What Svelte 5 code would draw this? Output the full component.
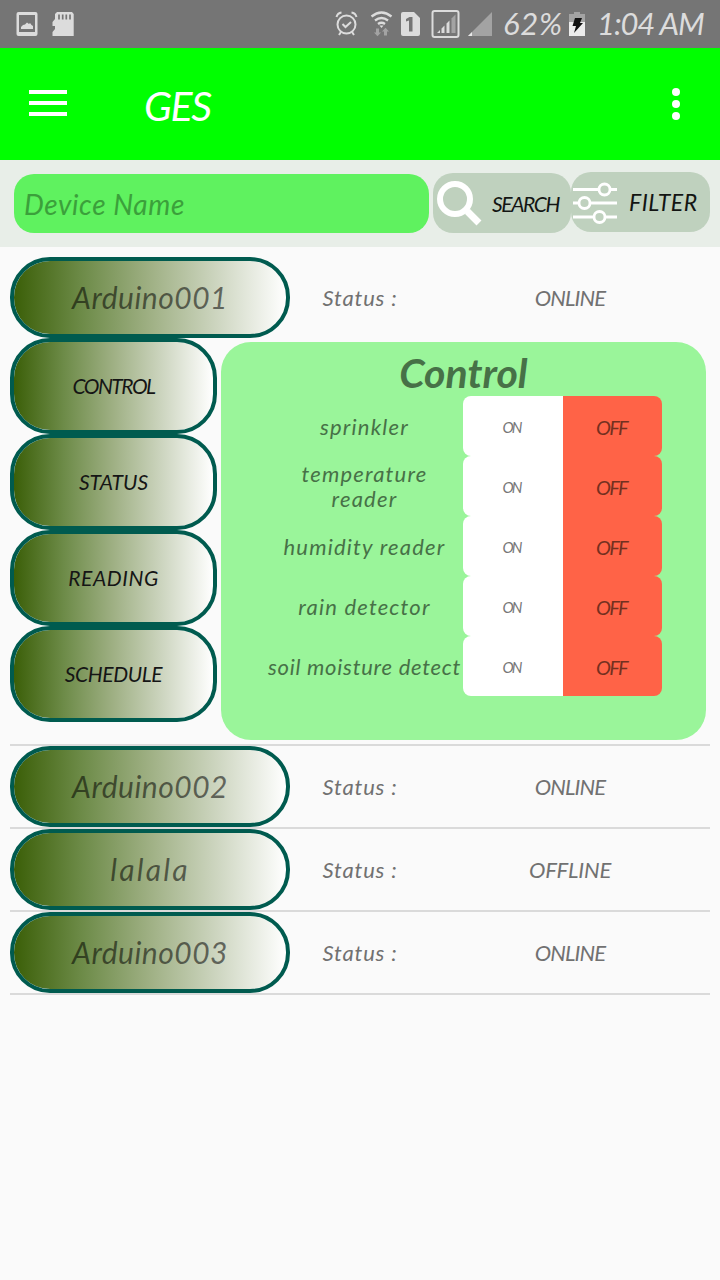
<script>
  const tabs = [
    { name: 'CONTROL', gap: -1.5 },
    { name: 'STATUS', gap: 0 },
    { name: 'READING', gap: 0.6 },
    { name: 'SCHEDULE', gap: -0.4 }
  ];
  const sensors = ['sprinkler', 'temperature reader', 'humidity reader', 'rain detector', 'soil moisture detect'];
  const devices = [
    { name: 'Arduino001', state: 'ONLINE', open: true },
    { name: 'Arduino002', state: 'ONLINE' },
    { name: 'lalala', state: 'OFFLINE' },
    { name: 'Arduino003', state: 'ONLINE' }
  ];
</script>

<div class="screen">
  <div class="statusbar">
    <svg class="notices" width="80" height="48" viewBox="0 0 80 48">
      <path fill="#dcdcdc" fill-rule="evenodd" d="M18.500 12h17a2 2 0 0 1 2 2v20a2 2 0 0 1-2 2h-17a2 2 0 0 1-2-2V14a2 2 0 0 1 2-2zM19 15v17h16V15z" />
      <path fill="#dcdcdc" d="M21 29v-2l2-2 2-.5 2-2 2 1.500 1-1 1.500 2 1.500 1v3z" />
      <path fill="#dcdcdc" d="M57 12h15l1.700 2v22H52.500v-4l2.500-3v-3h-2.500v-4l2.500-3v-5z" />
      <path stroke="#757575" stroke-width="1.700" d="M59 14.500v5M62.700 14.500v5M66.300 14.500v5M70 14.500v5" />
    </svg>
    <div class="system">
      <svg width="164" height="48" viewBox="332 0 164 48">
        <g fill="none" stroke="#dcdcdc" stroke-width="2">
          <circle cx="346.500" cy="24.500" r="9" />
          <path d="M342.500 24l3 3 5.500-5M336.500 17q1-4 5-4.500M351.500 12.500q4 .5 5 4.500M341 32l-2 3M352 32l2 3" />
          <path stroke-width="2.300" d="M371.500 16.500q10-8 20 0M375 20.500q6.500-5 13 0M378 24q3.500-2.500 7 0" />
        </g>
        <path fill="#dcdcdc" d="M379.500 25.500h4l-2 2.500z" />
        <path fill="#a3a3a3" d="M376 28.500h3v4h2l-3.500 3.700-3.500-3.700h2zM384 35.500v-4h-2l3.500-3.700 3.500 3.700h-2v4z" />
        <path fill="#dcdcdc" d="M403 12h11l6 6v16q0 2-2 2h-15q-2 0-2-2V14q0-2 2-2z" />
        <path fill="#757575" d="M409.500 17h3v14.500h-3.500V20.500l-3 1V19z" />
        <rect x="432.500" y="11" width="26" height="26" rx="2" fill="none" stroke="#dcdcdc" stroke-width="2" />
        <path fill="#dcdcdc" d="M437 33l3-3v3zM441.500 28.500l3-3V33h-3zM446.500 23.500l3-3V33h-3z" />
        <path fill="#a3a3a3" d="M451.500 18.500l4-4V33h-4z" />
        <path fill="#a3a3a3" d="M468 36l24-24v24z" />
        <path fill="#e8e8e8" d="M468 36l4-4v4z" />
      </svg>
      <span class="percent">62%</span>
      <svg width="16" height="24" viewBox="0 0 16 24">
        <path fill="#a3a3a3" d="M5 0h6v2h5v9H0V2h5z" />
        <path fill="#ececec" d="M0 10h16v14H0z" />
        <path fill="#111" d="M6 6h7l-2 5h3L5 21l2-7H3.500z" />
      </svg>
      <span class="clock">1:04 AM</span>
    </div>
  </div>

  <header>
    <svg class="menu" width="38" height="26" viewBox="0 0 38 26"><path fill="#fff" d="M0 0h38v4H0zM0 11h38v4H0zM0 22h38v4H0z" /></svg>
    <h1>GES</h1>
    <svg width="8" height="32" viewBox="0 0 8 32" fill="#fff"><circle cx="4" cy="4" r="4" /><circle cx="4" cy="16" r="4" /><circle cx="4" cy="28" r="4" /></svg>
  </header>

  <div class="searchbar">
    <div class="field">Device Name</div>
    <button class="tool search">
      <svg width="45" height="45" viewBox="0 0 45 45" fill="none" stroke="#fff"><circle cx="18" cy="18" r="15" stroke-width="6" /><path stroke-width="6" d="M28.500 28.500l4 4" /><path stroke-width="7" stroke-linecap="square" d="M33 33l6.500 6.500" /></svg>
      <span>SEARCH</span>
    </button>
    <button class="tool filter">
      <svg width="44" height="42" viewBox="0 0 44 42" fill="#bfd1be" stroke="#fff" stroke-width="2.800"><path d="M0 7.500h44M0 21h44M0 35h44" /><circle cx="31.500" cy="7.500" r="5.500" /><circle cx="11.500" cy="21" r="5.500" /><circle cx="26.500" cy="35" r="5.500" /></svg>
      <span>FILTER</span>
    </button>
  </div>

  <main>
    {#each devices as device}
      <section>
        <div class="row">
          <div class="pill name" class:short={device.name === 'lalala'}>{device.name}</div>
          <div class="caption">Status :</div>
          <div class="state" class:offline={device.state === 'OFFLINE'}>{device.state}</div>
        </div>
        {#if device.open}
          <div class="details">
            <nav>
              {#each tabs as tab}
                <button class="pill tab" style="letter-spacing: {tab.gap}px">{tab.name}</button>
              {/each}
            </nav>
            <div class="panel">
              <h2>Control</h2>
              {#each sensors as sensor, i}
                <div class="sensor">
                  <div class="label label{i}">{sensor}</div>
                  <div class="switch"><span class="on">ON</span><span class="off">OFF</span></div>
                </div>
              {/each}
            </div>
          </div>
        {/if}
      </section>
    {/each}
  </main>
</div>

<style>
  :global(body) { background: #fafafa; }
  * { box-sizing: border-box; }
  .screen { height: 1280px; overflow: hidden; background: #fafafa; font-family: Lato, sans-serif; font-style: italic; color: #717171; }
  svg { display: block; flex: none; }
  h1, h2 { margin: 0; }
  button { font: inherit; border: 0; padding: 0; }
  .statusbar { height: 48px; background: #757575; display: flex; justify-content: space-between; color: #dcdcdc; font-size: 31px; white-space: nowrap; }
  .system { display: flex; align-items: center; width: 388px; }
  .percent { width: 73px; padding: 0 0 2px 7px; letter-spacing: 0.7px; }
  .clock { padding: 0 0 2px 12px; letter-spacing: -1.100px; }
  header { height: 112px; background: #0f0; display: flex; align-items: center; padding: 0 40px 0 29px; }
  .menu { margin-bottom: 2px; }
  h1 { flex: 1; padding: 2px 0 0 77px; color: #fff; font-size: 41px; font-weight: 400; letter-spacing: -1.300px; }
  .searchbar { height: 87px; background: #e8eee8; display: flex; align-items: flex-start; padding: 12px 10px 0 14px; }
  .field { width: 415px; height: 59px; margin: 2px 4px 0 0; border-radius: 20px; background: #5ff25f; color: #3ba03b; font-size: 28px; line-height: 60px; padding-left: 10px; letter-spacing: 0.6px; }
  .tool { height: 60px; border-radius: 20px; background: #bfd1be; color: #131513; display: flex; align-items: center; font-size: 21px; }
  .search { width: 138px; margin-top: 1px; padding-left: 4px; gap: 10px; letter-spacing: -1.400px; }
  .filter { width: 139px; padding-left: 2px; gap: 12px; font-size: 23px; letter-spacing: 0.5px; }
  .filter svg { margin-top: 1px; }
  main { padding: 10px 10px 0; }
  section { border-bottom: 2px solid #dadada; }
  .row { display: flex; align-items: center; height: 81px; font-size: 22px; }
  .pill { border: 4px solid #005b4f; border-radius: 40px; background: linear-gradient(90deg, #3b5f08, #6d8b48 25%, #9fb084 50%, #ced6c1 75%, #fff) padding-box; display: flex; align-items: center; justify-content: center; }
  .name { width: 280px; height: 81px; color: rgba(0, 0, 0, .54); font-size: 30px; letter-spacing: 0.5px; padding-bottom: 2px; }
  .name.short { letter-spacing: 2.200px; }
  .caption { width: 140px; text-align: center; letter-spacing: 0.8px; }
  .state { width: 280px; text-align: center; letter-spacing: -0.9px; }
  .state.offline { letter-spacing: -0.2px; }
  .details { display: flex; gap: 4px; height: 406px; }
  nav { width: 207px; }
  .tab { width: 207px; height: 96px; color: #151515; font-size: 21px; padding-bottom: 1px; }
  .panel { width: 485px; height: 398px; margin-top: 4px; border-radius: 30px; background: #9af59a; color: #477147; }
  h2 { height: 54px; line-height: 62px; font-size: 41px; text-align: center; letter-spacing: 0; }
  .sensor { display: flex; height: 60px; padding-left: 45px; align-items: center; }
  .label { width: 197px; text-align: center; font-size: 22px; line-height: 25px; padding: 0; letter-spacing: 1.200px; }
  .label1 { padding: 0 30px; }
  .label4 { white-space: nowrap; letter-spacing: 0.75px; }
  .switch { display: flex; width: 199px; height: 60px; border-radius: 8px; overflow: hidden; line-height: 62px; text-align: center; }
  .on { width: 100px; background: #fff; color: #777; font-size: 15px; padding-right: 3px; letter-spacing: -2px; }
  .off { width: 99px; background: #ff6347; color: #74301f; font-size: 20px; padding-right: 2px; letter-spacing: -1.700px; }
</style>
